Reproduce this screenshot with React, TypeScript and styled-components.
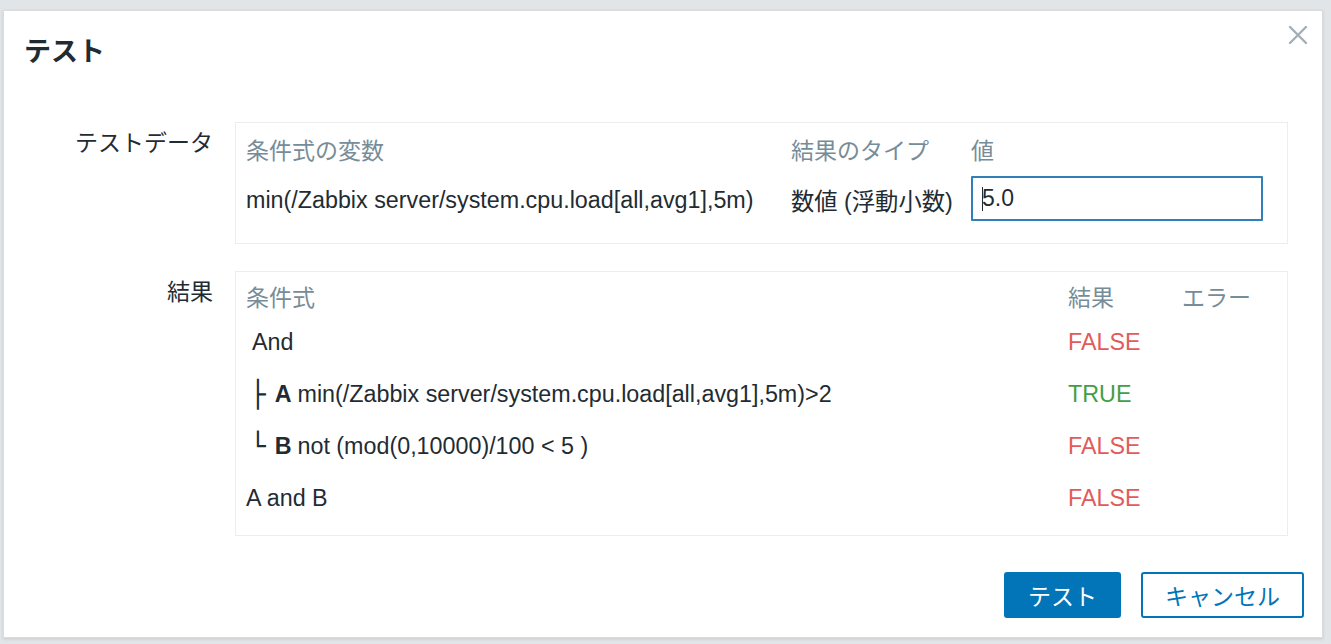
import styled, { createGlobalStyle } from 'styled-components'

const GlobalStyle = createGlobalStyle`
  html, body {
    margin: 0;
    padding: 0;
    background: #e2e5e8;
  }
  body {
    font-family: "Liberation Sans", Arial, "Noto Sans CJK JP", sans-serif;
    color: #1f2c33;
  }
`;

const Page = styled.div`
  padding: 10px 8px 6px 3px;
`;

const Dialog = styled.div`
  position: relative;
  box-sizing: border-box;
  width: 1320px;
  height: 628px;
  background: #ffffff;
  border: 1px solid #d9dde0;
  box-shadow: 0 1px 3px rgba(0, 0, 0, 0.12);
  display: flex;
  flex-direction: column;
`;

const Title = styled.h4`
  margin: 0;
  padding: 24px 20px 0;
  height: 40px;
  font-size: 27px;
  font-weight: bold;
  line-height: 34px;
  color: #1f2c33;
`;

const CloseButton = styled.button`
  position: absolute;
  top: 10px;
  right: 10px;
  width: 28px;
  height: 28px;
  padding: 0;
  border: none;
  background: transparent;
  display: flex;
  align-items: center;
  justify-content: center;
  cursor: pointer;
`;

const Body = styled.div`
  flex: 1;
  padding: 47px 0 0;
  display: flex;
  flex-direction: column;
  gap: 27px;
`;

const FormRow = styled.div`
  display: grid;
  grid-template-columns: 209px 1053px;
  column-gap: 22px;
  align-items: start;
`;

const Label = styled.div`
  text-align: right;
  font-size: 23px;
  line-height: 30px;
  padding-top: 6px;
  color: #1f2c33;
`;

const Panel = styled.div<{ $top: number; $bottom: number }>`
  box-sizing: border-box;
  border: 1px solid #ebeef0;
  padding: ${(p) => p.$top}px 10px ${(p) => p.$bottom}px;
`;

const Grid = styled.div<{ $cols: string }>`
  display: grid;
  grid-template-columns: ${(p) => p.$cols};
`;

const HeadCell = styled.div`
  height: 40px;
  display: flex;
  align-items: center;
  font-size: 23px;
  color: #768d99;
  white-space: nowrap;
`;

const Cell = styled.div<{ $h: number; $indent?: number; $color?: string }>`
  height: ${(p) => p.$h}px;
  display: flex;
  align-items: center;
  font-size: 23.3px;
  padding-left: ${(p) => p.$indent ?? 0}px;
  color: ${(p) => p.$color ?? '#1f2c33'};
  white-space: nowrap;
`;

const Tree = styled.span`
  font-weight: bold;
  margin-left: -2px;
  margin-right: 9px;
  font-family: "DejaVu Sans", sans-serif;
  font-size: 26px;
`;

const Bold = styled.b`
  margin-right: 6px;
`;

const InputWrap = styled.div`
  position: relative;
  width: 292px;
  height: 45px;
  margin-top: -3px;
`;

const Input = styled.input`
  box-sizing: border-box;
  width: 100%;
  height: 100%;
  border: 2px solid #2f7fba;
  border-radius: 1px;
  padding: 0 9px;
  font-family: "Liberation Sans", Arial, sans-serif;
  font-size: 23px;
  color: #1f2c33;
  outline: none;
`;

const Caret = styled.span`
  position: absolute;
  left: 11px;
  top: 11px;
  width: 1px;
  height: 24px;
  background: #1f2c33;
`;

const Footer = styled.div`
  display: flex;
  justify-content: flex-end;
  gap: 20px;
  padding: 0 18px 19px 0;
`;

const Button = styled.button<{ $primary?: boolean }>`
  box-sizing: border-box;
  height: 46px;
  padding: 0 22px;
  border-radius: 3px;
  border: 2px solid #0275b8;
  background: ${(p) => (p.$primary ? '#0275b8' : '#ffffff')};
  color: ${(p) => (p.$primary ? '#ffffff' : '#0275b8')};
  font-family: "Liberation Sans", Arial, "Noto Sans CJK JP", sans-serif;
  font-size: 23px;
  cursor: pointer;
`;

const RED = '#e45959';
const GREEN = '#429e47';

const results = [
  { key: 'and', indent: 6, content: <>And</>, value: 'FALSE', color: RED },
  {
    key: 'a',
    indent: 6,
    content: (
      <>
        <Tree>├</Tree>
        <Bold>A</Bold>min(/Zabbix server/system.cpu.load[all,avg1],5m)&gt;2
      </>
    ),
    value: 'TRUE',
    color: GREEN,
  },
  {
    key: 'b',
    indent: 6,
    content: (
      <>
        <Tree>└</Tree>
        <Bold>B</Bold>not (mod(0,10000)/100 &lt; 5 )
      </>
    ),
    value: 'FALSE',
    color: RED,
  },
  { key: 'ab', indent: 0, content: <>A and B</>, value: 'FALSE', color: RED },
];

export default function App() {
  return (
    <Page>
      <GlobalStyle />
      <Dialog>
        <Title>テスト</Title>
        <CloseButton aria-label="閉じる">
          <svg width="20" height="20" viewBox="0 0 20 20">
            <path d="M2 2 L18 18 M18 2 L2 18" stroke="#a3afb6" strokeWidth="2.4" strokeLinecap="round" />
          </svg>
        </CloseButton>
        <Body>
          <FormRow>
            <Label>テストデータ</Label>
            <Panel $top={6} $bottom={12}>
              <Grid $cols="545px 180px 1fr">
                <HeadCell>条件式の変数</HeadCell>
                <HeadCell>結果のタイプ</HeadCell>
                <HeadCell>値</HeadCell>
                <Cell $h={62}>min(/Zabbix server/system.cpu.load[all,avg1],5m)</Cell>
                <Cell $h={62}>数値 (浮動小数)</Cell>
                <Cell $h={62}>
                  <InputWrap>
                    <Input defaultValue="5.0" />
                    <Caret />
                  </InputWrap>
                </Cell>
              </Grid>
            </Panel>
          </FormRow>
          <FormRow>
            <Label>結果</Label>
            <Panel $top={4} $bottom={11}>
              <Grid $cols="822px 114px 1fr">
                <HeadCell>条件式</HeadCell>
                <HeadCell>結果</HeadCell>
                <HeadCell>エラー</HeadCell>
                {results.map((r) => (
                  <>
                    <Cell key={r.key + '-e'} $h={52} $indent={r.indent}>{r.content}</Cell>
                    <Cell key={r.key + '-r'} $h={52} $color={r.color}>{r.value}</Cell>
                    <Cell key={r.key + '-x'} $h={52} />
                  </>
                ))}
              </Grid>
            </Panel>
          </FormRow>
        </Body>
        <Footer>
          <Button $primary>テスト</Button>
          <Button>キャンセル</Button>
        </Footer>
      </Dialog>
    </Page>
  );
}
